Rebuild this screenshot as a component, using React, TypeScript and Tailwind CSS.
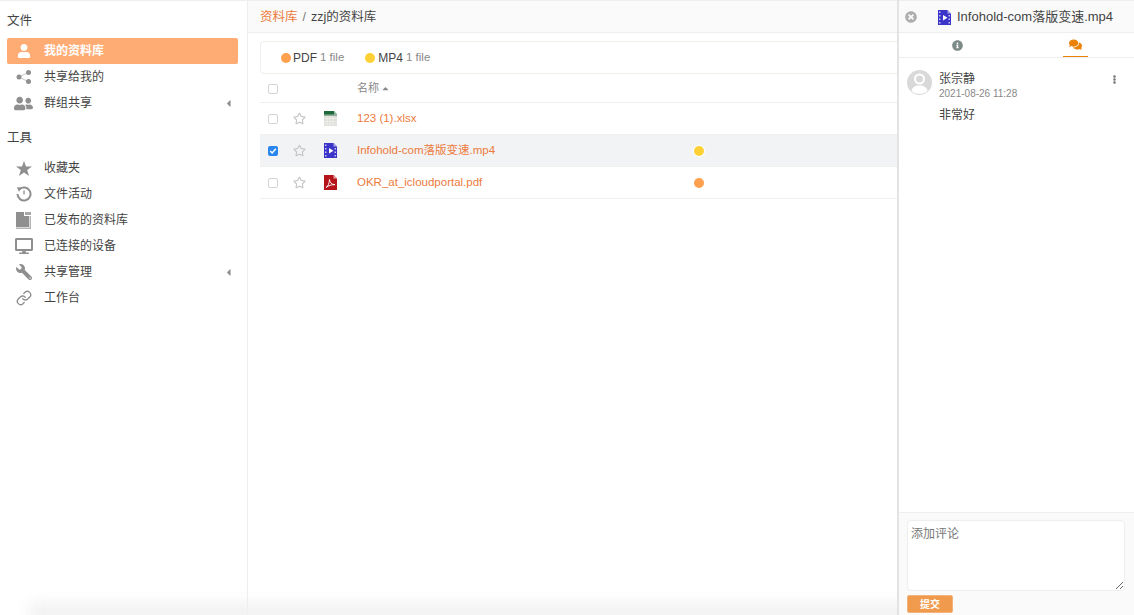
import React from "react";
import { FaUser, FaUserFriends, FaRegStar, FaDesktop, FaWrench, FaInfoCircle, FaComments, FaTimesCircle, FaEllipsisV, FaCaretLeft, FaCaretUp } from "react-icons/fa";
import { Link as LinkIcon } from "lucide-react";

const font = { fontFamily: '"Liberation Sans", "Noto Sans CJK SC", sans-serif' };

function BookIcon() {
  return (
    <svg width="15" height="17" viewBox="0 0 15 17">
      <path d="M0 0h8v4h5v11H0z" fill="#8f8f8f" />
      <path d="M9 0h6v3H9z" fill="#a8a8a8" />
      <path d="M13.500 4H15v13H0v-1.500h13.500z" fill="#b5b5b5" />
    </svg>
  );
}

function ShareDots() {
  return (
    <svg width="16" height="14" viewBox="0 0 16 14">
      <path d="M3 7L12 2.500M3 7l9 4.500" stroke="#c4c4c4" strokeWidth="1" />
      <circle cx="3" cy="7" r="2.500" fill="#8f8f8f" />
      <circle cx="12.500" cy="2.500" r="2.500" fill="#8f8f8f" />
      <circle cx="12.500" cy="11.500" r="2.500" fill="#8f8f8f" />
    </svg>
  );
}

function SharpStar() {
  return (
    <svg width="16" height="15" viewBox="0 0 16 15">
      <path d="M8 0l2 5.500h6l-4.800 3.600 1.800 5.900-5-3.600-5 3.600 1.800-5.900L0 5.500h6z" fill="#8f8f8f" />
    </svg>
  );
}

function ClockIcon() {
  return (
    <svg width="16" height="16" viewBox="0 0 16 16" fill="none">
      <path d="M3.600 3.200A6.500 6.500 0 1 1 1.500 8" stroke="#8f8f8f" strokeWidth="2" />
      <path d="M0.800 1.200L5.800 1.400 3 5.800z" fill="#8f8f8f" />
      <path d="M8 4.500V8.500" stroke="#8f8f8f" strokeWidth="1.300" />
    </svg>
  );
}

function AvatarIcon() {
  return (
    <svg width="25" height="25" viewBox="0 0 25 25">
      <circle cx="12.500" cy="12.500" r="12.500" fill="#d9d9d9" />
      <circle cx="12.500" cy="9" r="4.500" fill="none" stroke="#fff" strokeWidth="2" />
      <path d="M4.500 21c.5-3.500 3.500-5.500 8-5.500s7.500 2 8 5.500c-2 2-5 3-8 3s-6-1-8-3z" fill="#fff" />
    </svg>
  );
}

function NavRow({ icon, label, active, caret }: { icon: React.ReactNode; label: string; active?: boolean; caret?: boolean }) {
  return (
    <div className={`h-[26px] flex items-center ml-[7px] mr-[9px] text-[12px] ${active ? "bg-[#ffac74] text-white font-bold rounded-[2px]" : "text-[#444]"}`}>
      <span className={`w-[37px] pr-[4px] flex justify-center ${active ? "text-white" : "text-[#8f8f8f]"}`}>{icon}</span>
      <span className="flex-1">{label}</span>
      {caret && <FaCaretLeft size={11} className="text-[#8f8f8f] mr-[4px]" />}
    </div>
  );
}

function FileIcon({ kind }: { kind: "xlsx" | "mp4" | "pdf" }) {
  if (kind === "xlsx")
    return (
      <svg width="13" height="15" viewBox="0 0 13 15">
        <path d="M0 0h10l3 3v12H0z" fill="#deded9" />
        <path d="M0 0h10v3.500H0z" fill="#1f6a3c" />
        <path d="M10 0l3 3h-3z" fill="#8db59b" />
        <path d="M0 4h13" stroke="#1f6a3c" strokeWidth="0.8" />
        <path d="M3 5v10M6 5v10M9 5v10M0 7.500h13M0 10.500h13M0 13h13" stroke="#f5f5f3" strokeWidth="0.6" />
      </svg>
    );
  if (kind === "mp4")
    return (
      <svg width="13" height="15" viewBox="0 0 13 15">
        <path d="M0 0h9.500l3.500 3.500V15H0z" fill="#3a35c8" />
        <path d="M9.500 0L13 3.500H9.500z" fill="#a9a7ea" />
        <path d="M1 1.500h1.500v1.500H1zM1 5h1.500v1.500H1zM1 8.500h1.500V10H1zM1 12h1.500v1.500H1zM10.500 5H12v1.500h-1.500zM10.500 8.500H12V10h-1.500zM10.500 12H12v1.500h-1.500z" fill="#c5c4f2" />
        <path d="M5 5l4.500 2.700L5 10.500z" fill="#fff" />
      </svg>
    );
  return (
    <svg width="13" height="15" viewBox="0 0 13 15">
      <path d="M0 0h9.500l3.500 3.500V15H0z" fill="#b5141b" />
      <path d="M9.500 0L13 3.500H9.500z" fill="#e7a6a8" />
      <path d="M2 12.500c2-1 3.300-4 3.500-8 .3 3 2 5 5.500 5.200-3-.2-6.500.8-9 2.800z" fill="none" stroke="#fff" strokeWidth="0.9" />
    </svg>
  );
}

function Check({ checked }: { checked?: boolean }) {
  return checked ? (
    <span className="w-[10px] h-[10px] rounded-[2px] bg-[#2a86ef] flex items-center justify-center">
      <svg width="8" height="8" viewBox="0 0 8 8"><path d="M1.200 4l2 2L6.800 1.800" fill="none" stroke="#fff" strokeWidth="1.400" /></svg>
    </span>
  ) : (
    <span className="w-[10px] h-[10px] rounded-[2px] border border-[#d4d4d4] bg-white" />
  );
}

function FileRow({ kind, name, dot, selected }: { kind: "xlsx" | "mp4" | "pdf"; name: string; dot: string; selected?: boolean }) {
  return (
    <div className={`h-[32px] flex items-center border-b border-[#f0f0ee] text-[11.500px] ${selected ? "bg-[#f2f3f5]" : ""}`}>
      <span className="w-[32px] pl-[8px] flex"><Check checked={selected} /></span>
      <span className="w-[32px] flex"><FaRegStar size={13} className="text-[#c4c4c4] ml-[1px]" /></span>
      <span className="w-[33px] flex"><FileIcon kind={kind} /></span>
      <span className="w-[337px] text-[#ec7a3c]">{name}</span>
      <span className={`w-[10px] h-[10px] rounded-full ${dot}`} />
    </div>
  );
}

export default function App() {
  return (
    <div className="w-[1134px] h-[615px] overflow-hidden flex bg-white text-[#333] relative" style={font}>
      <aside className="w-[248px] shrink-0 border-r border-[#eeeeee] pt-[8px] border-t">
        <div className="h-[24px] pl-[7px] flex items-center text-[12.500px] text-[#444]">文件</div>
        <div className="mt-[5px]">
          <NavRow active icon={<FaUser size={14} />} label="我的资料库" />
          <NavRow icon={<ShareDots />} label="共享给我的" />
          <NavRow icon={<FaUserFriends size={19} />} label="群组共享" caret />
        </div>
        <div className="h-[24px] mt-[10px] pl-[7px] flex items-center text-[12.500px] text-[#444]">工具</div>
        <div className="mt-[5px]">
          <NavRow icon={<SharpStar />} label="收藏夹" />
          <NavRow icon={<ClockIcon />} label="文件活动" />
          <NavRow icon={<BookIcon />} label="已发布的资料库" />
          <NavRow icon={<FaDesktop size={18} />} label="已连接的设备" />
          <NavRow icon={<FaWrench size={16} className="-scale-x-100" />} label="共享管理" caret />
          <NavRow icon={<LinkIcon size={16} strokeWidth={2} />} label="工作台" />
        </div>
      </aside>

      <main className="w-[649px] shrink-0 overflow-hidden">
        <div className="h-[33px] bg-[#fafafa] border-b border-[#eeeeee] border-t pl-[12px] pt-[2px] flex items-center text-[12.500px]">
          <span className="text-[#ec7a3c]">资料库</span>
          <span className="mx-[5px] text-[#777]">/</span>
          <span className="text-[#444]">zzj的资料库</span>
        </div>
        <div className="pl-[12px]">
          <div className="mt-[8px] h-[33px] w-[700px] border border-[#efefea] rounded-[4px] flex items-center pl-[20px] text-[12px] text-[#444]">
            <span className="w-[10px] h-[10px] rounded-full bg-[#ffa04f] mr-[2px]" />
            <span>PDF</span>
            <span className="ml-[3px] text-[#888] text-[11.500px]">1 file</span>
            <span className="w-[10px] h-[10px] rounded-full bg-[#ffd035] ml-[21px] mr-[3px]" />
            <span>MP4</span>
            <span className="ml-[3px] text-[#888] text-[11.500px]">1 file</span>
          </div>
          <div className="h-[29px] pt-[1px] flex items-center border-b border-[#eeeeee] text-[11px] text-[#888]">
            <span className="w-[97px] pl-[8px] flex"><Check /></span>
            <span>名称</span>
            <FaCaretUp size={9} className="ml-[2px] text-[#888]" />
          </div>
          <FileRow kind="xlsx" name="123 (1).xlsx" dot="hidden" />
          <FileRow kind="mp4" name="Infohold-com落版变速.mp4" dot="bg-[#ffd035] ring-1 ring-white" selected />
          <FileRow kind="pdf" name="OKR_at_icloudportal.pdf" dot="bg-[#ffa04f]" />
        </div>
      </main>

      <section className="flex-1 min-w-0 border-l-2 border-[#e3e3e3] flex flex-col bg-white relative z-10">
        <div className="h-[33px] shrink-0 bg-[#fafafa] border-b border-[#eeeeee] border-t pt-[1px] flex items-center pl-[6px] text-[13px] text-[#444]">
          <FaTimesCircle size={12} className="text-[#aeaeae]" />
          <span className="ml-[21px] mr-[6px] flex"><FileIcon kind="mp4" /></span>
          <span>Infohold-com落版变速.mp4</span>
        </div>
        <div className="h-[25px] shrink-0 flex border-b border-[#eeeeee]">
          <div className="flex-1 flex items-center justify-center"><FaInfoCircle size={11} className="text-[#7c8a88]" /></div>
          <div className="flex-1 flex items-center justify-center">
            <div className="w-[25px] h-full flex items-center justify-center border-b border-[#eb8205]"><FaComments size={13} className="text-[#eb8205]" /></div>
          </div>
        </div>
        <div className="flex-1 min-h-0 flex pl-[8px] pr-[15px] pt-[12px]">
          <div className="w-[25px] h-[25px] shrink-0"><AvatarIcon /></div>
          <div className="flex-1 pl-[7px]">
            <div className="text-[12px] leading-[15px] text-[#444] mt-[2px]">张宗静</div>
            <div className="text-[10px] leading-[14px] text-[#888]">2021-08-26 11:28</div>
            <div className="text-[12px] leading-[16px] text-[#444] mt-[6px]">非常好</div>
          </div>
          <FaEllipsisV size={9} className="text-[#777] mt-[5px]" />
        </div>
        <div className="h-[103px] shrink-0 border-t border-[#eeeeee] bg-[#fafafa] pl-[8px] pr-[8px] pt-[7px]">
          <textarea
            placeholder="添加评论"
            className="block w-[218px] h-[71px] bg-white border border-[#eeeeee] rounded-[4px] px-[3px] py-[5px] text-[12px] leading-[16px] placeholder:text-[#777] outline-none"
          />
          <div className="mt-[4px] w-[46px] h-[18px] rounded-[2px] bg-[#f09a4e] border border-[#f5b27a] flex items-center justify-center text-white text-[10px] font-bold">提交</div>
        </div>
      </section>

      <div className="absolute left-[30px] right-0 -bottom-[8px] h-[20px] bg-[#f0f0f0] blur-[8px] pointer-events-none" />
    </div>
  );
}
